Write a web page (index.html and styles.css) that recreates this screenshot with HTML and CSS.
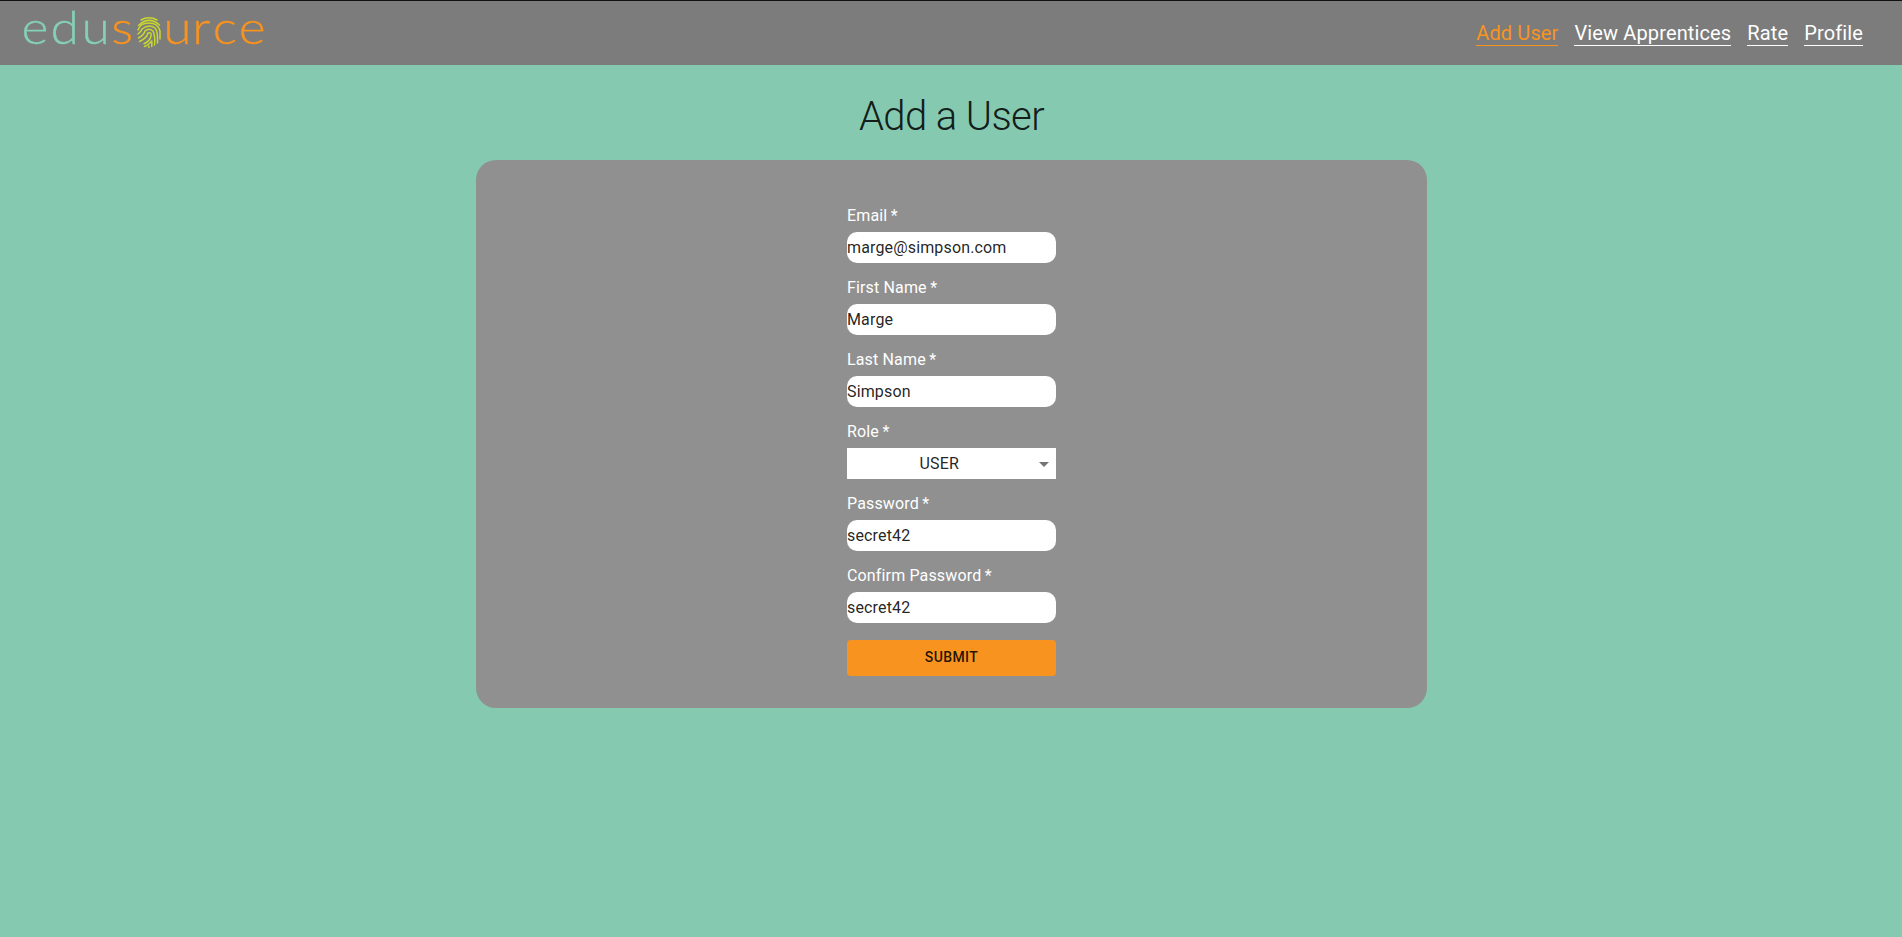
FILE: index.html
```html
<!DOCTYPE html>
<html lang="en">
<head>
<meta charset="utf-8">
<title>edusource</title>
<link rel="stylesheet" href="styles.css">
</head>
<body>
<header class="header">
  <svg class="logo" width="250" height="56" viewBox="20 0 250 56" role="img" aria-label="edusource">
    <g transform="scale(1.12 1)">
      <text class="logo-edu" y="43.5" x="19.3 45.2 72.8">edu</text>
      <text class="logo-source" y="43.5" x="99.4">s</text>
      <text class="logo-source" y="44" x="145.8 171.6 189.9 213.2">urce</text>
    </g>
    <g class="print">
      <path d="M141 20Q149 15.5 157 20"/>
      <path d="M138.5 25.5Q149 15.5 159.5 25"/>
      <path d="M138 30Q140 23 149 23Q158 23 160 31V39"/>
      <path d="M138 34Q141 32 142 29Q149 23.5 155 28Q158 31 157.5 43"/>
      <path d="M138.5 38Q144 35 145 31Q149 27.5 153 31Q155.5 36 154.5 45"/>
      <path d="M139.5 41.5Q147 38 148 33Q152 32 151 36Q150 41 144 43.8"/>
      <path d="M144.5 46.5Q150 44 151.8 40.5V46.5"/>
      <path d="M148.8 46.2V47.5"/>
    </g>
  </svg>
  <nav class="nav">
    <a class="nav-link active">Add User</a>
    <a class="nav-link">View Apprentices</a>
    <a class="nav-link">Rate</a>
    <a class="nav-link">Profile</a>
  </nav>
</header>
<main class="main">
  <h1 class="title">Add a User</h1>
  <form class="card">
    <div class="fields">
      <label class="label">Email<span class="star"> *</span></label>
      <div class="input">marge@simpson.com</div>
      <label class="label">First Name<span class="star"> *</span></label>
      <div class="input">Marge</div>
      <label class="label">Last Name<span class="star"> *</span></label>
      <div class="input">Simpson</div>
      <label class="label">Role<span class="star"> *</span></label>
      <div class="input select">USER
        <svg class="caret" width="24" height="24" viewBox="0 0 24 24"><path d="M7 10l5 5 5-5z"/></svg>
      </div>
      <label class="label">Password<span class="star"> *</span></label>
      <div class="input">secret42</div>
      <label class="label">Confirm Password<span class="star"> *</span></label>
      <div class="input">secret42</div>
      <button class="submit" type="button">SUBMIT</button>
    </div>
  </form>
</main>
</body>
</html>
```
FILE: styles.css
```css
* { box-sizing: border-box; }
body {
  margin: 0;
  min-height: 100vh;
  background: #86c9b1;
  font-family: Roboto, sans-serif;
  font-size: 16px;
  color: rgba(0, 0, 0, 0.87);
}
.header {
  display: flex;
  justify-content: space-between;
  height: 65px;
  padding: 0 39px 0 20px;
  background: #7c7c7c;
  border-top: 1px solid #111;
}
.logo { margin-top: -1px; overflow: visible; }
.logo text {
  font-family: Lato, sans-serif;
  font-weight: 300;
  font-size: 46px;
  stroke-width: 0.3;
}
.logo-edu { fill: #86d0b8; stroke: #86d0b8; }
.logo-source { fill: #f8931f; stroke: #f8931f; }
.print {
  fill: none;
  stroke: #c8d82e;
  stroke-width: 1.5;
  stroke-linecap: round;
}
.nav {
  display: flex;
  gap: 16px;
  padding-top: 20px;
}
.nav-link {
  height: 25px;
  line-height: 25px;
  font-size: 20px;
  letter-spacing: 0.0065em;
  color: #fff;
  border-bottom: 1px solid #fff;
}
.active { color: #f8931f; border-color: #f8931f; }
.main {
  display: flex;
  flex-direction: column;
  align-items: center;
}
.title {
  margin: 28px 0 20px;
  padding-left: 1px;
  font-size: 40px;
  line-height: 47px;
  font-weight: 300;
  letter-spacing: -0.015em;
}
.card {
  display: flex;
  justify-content: center;
  width: 50%;
  height: 548px;
  padding: 41px 0 0 1px;
  background: #909090;
  border-radius: 20px;
}
.fields { width: 209px; }
.label {
  display: block;
  height: 31px;
  line-height: 30px;
  letter-spacing: 0.00938em;
  color: #fff;
}
.star { white-space: pre; letter-spacing: -0.03em; }
.input {
  height: 31px;
  margin-bottom: 10px;
  line-height: 31px;
  letter-spacing: 0.00938em;
  background: #fff;
  border-radius: 10px;
}
.select {
  display: flex;
  align-items: center;
  border-radius: 0;
  padding-left: 72.5px;
}
.caret { margin-left: auto; fill: #757575; }
.submit {
  width: 209px;
  height: 36px;
  margin-top: 7px;
  padding: 0 0 2px;
  border: 0;
  border-radius: 4px;
  background: #f8931f;
  color: rgba(0, 0, 0, 0.87);
  font-family: inherit;
  font-size: 14px;
  font-weight: 500;
  letter-spacing: 0.02857em;
}
```
